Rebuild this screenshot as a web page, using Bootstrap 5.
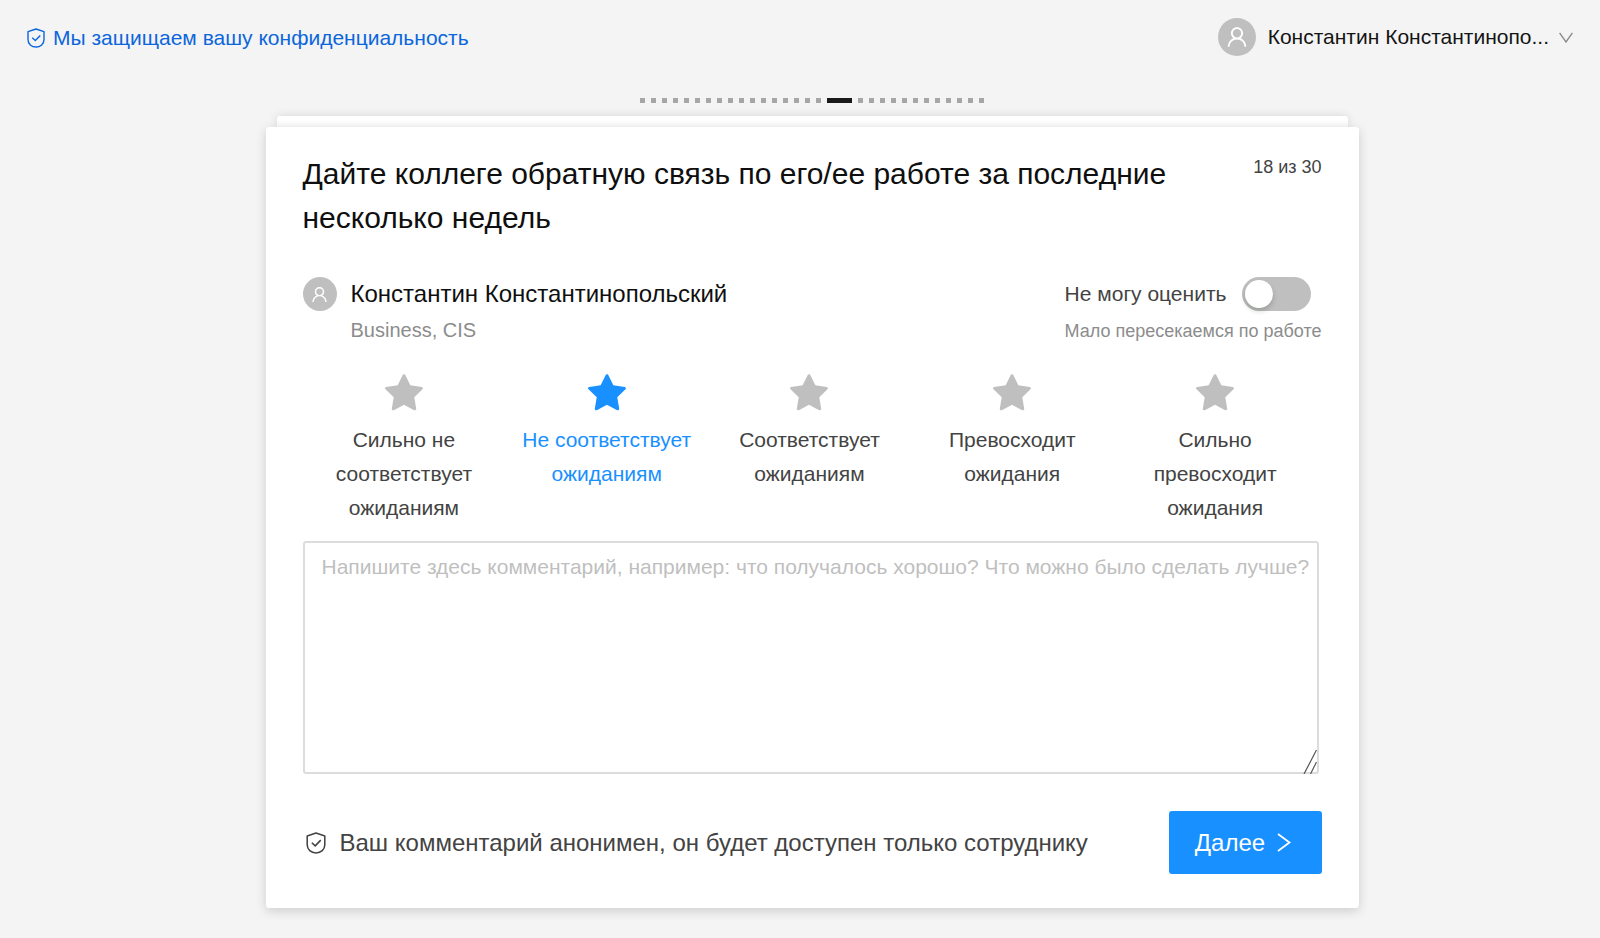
<!DOCTYPE html>
<html lang="ru">
<head>
<meta charset="utf-8">
<meta name="viewport" content="width=device-width, initial-scale=1">
<title>Обратная связь</title>
<link href="https://cdn.jsdelivr.net/npm/bootstrap@5.3.0/dist/css/bootstrap.min.css" rel="stylesheet">
<style>
  body { font-family: "Liberation Sans", Arial, sans-serif; font-size: 21px; line-height: 34px; color: #434343; background: #f4f4f4; }
  .topbar { padding: 18px 27px 0; line-height: 38px; }
  .privacy { color: #0b66dc; gap: 8px; padding-top: 1px; }
  .user-menu { font-size: 21px; line-height: 38px; color: #141414; gap: 12px; border: 0; }
  .user-menu svg:last-child { margin-left: -2px; }
  .avatar { width: 34px; height: 34px; border-radius: 50%; background: #bfbfbf; color: #fff; flex: none; }
  .avatar-lg { width: 38px; height: 38px; }
  .survey { max-width: 1117px; padding: 41px 12px 29px; left: 12px; }
  .steps { gap: 6px; height: 5px; margin-bottom: 13px; }
  .step { width: 5px; height: 5px; background: #a6a6a6; }
  .step.current { width: 25px; background: #1a1a1a; }
  .deck { height: 11px; margin: 0 11px; background: linear-gradient(#fff 40%, #f9f9f9); border-radius: 3px 3px 0 0; box-shadow: 0 0 10px rgba(0,0,0,.12); }
  .question { padding: 25px 37px 34px; background: #fff; border-radius: 3px; box-shadow: 0 3px 11px rgba(0,0,0,.16); }
  .question-title { font-size: 30px; line-height: 44px; font-weight: 400; color: #0f0f0f; max-width: 900px; margin: 0 0 37px; }
  .counter { font-size: 18px; line-height: 30px; }
  .person { font-size: 24px; line-height: 34px; color: #0f0f0f; }
  .identity { gap: 14px; }
  .muted { color: #8c8c8c; }
  .unit { font-size: 20px; line-height: 38px; }
  .hint { font-size: 18px; line-height: 40px; color: #8c8c8c; }
  .opt-out { gap: 16px; }
  .form-check-input.toggle { width: 69px; height: 34px; margin: 0; border: 0; background-color: #bfbfbf; background-image: none; box-shadow: none; }
  .toggle::before { content: ""; display: block; width: 28px; height: 28px; margin: 3px; border-radius: 50%; background: #fff; box-shadow: 0 3px 5px rgba(0,35,11,.2); }
  .toggle:checked::before { margin-left: 38px; }
  .form-check-input.toggle:checked { background-color: #1890ff; background-image: none; }
  .ratings { margin: 23px 5px 0 0; }
  .rating { flex: 1 1 0; padding: 0 12px; }
  .rating-star { display: block; margin: 0 auto 9px; color: #bfbfbf; }
  .btn-check:checked + .rating, .btn-check:checked + .rating .rating-star { color: #1890ff; }
  .comment { margin: 16px 3px 37px 0; }
  .comment textarea { height: 233px; padding: 7px 4px 7px 17px; font-size: 21px; line-height: 34px; border: 2px solid #dcdcdc; border-radius: 3px; resize: none; display: block; color: #434343; }
  .comment textarea::placeholder { color: #bfbfbf; }
  .grip { position: absolute; right: 2px; bottom: 0; color: #555; pointer-events: none; }
  .note { font-size: 24px; line-height: 36px; gap: 14px; padding-left: 3px; }
  .next { width: 153px; height: 63px; padding: 0 4px 0 0; font-size: 24px; background: #1890ff; color: #fff; border: 0; border-radius: 3px; gap: 12px; }
  .next:hover { background: #40a9ff; color: #fff; }
</style>
</head>
<body>
<svg width="0" height="0" class="d-none" aria-hidden="true">
  <symbol id="i-user" viewBox="64 64 896 896"><path fill="currentColor" d="M858.5 763.6a374 374 0 00-80.6-119.5 375.63 375.63 0 00-119.5-80.6c-.4-.2-.8-.3-1.2-.5C719.5 518 760 444.7 760 362c0-137-111-248-248-248S264 225 264 362c0 82.7 40.5 156 102.8 201.1-.4.2-.8.3-1.2.5-44.8 18.9-85 46-119.5 80.6a375.63 375.63 0 00-80.6 119.5A371.7 371.7 0 00136 901.8a8 8 0 008 8.2h60c4.4 0 7.9-3.5 8-7.8 2-77.2 33-149.5 87.8-204.3 56.7-56.7 132-87.9 212.2-87.9s155.5 31.2 212.2 87.9C779 752.7 810 825 812 902.2c.1 4.4 3.6 7.8 8 7.8h60a8 8 0 008-8.2c-1-47.8-10.9-94.3-29.5-138.2zM512 534c-45.9 0-89.1-17.9-121.6-50.4S340 407.9 340 362c0-45.9 17.9-89.1 50.4-121.6S466.1 190 512 190s89.1 17.9 121.6 50.4S684 316.1 684 362c0 45.9-17.9 89.1-50.4 121.6S557.9 534 512 534z"/></symbol>
  <symbol id="i-star" viewBox="64 64 896 896"><path fill="currentColor" d="M908.1 353.1l-253.9-36.9L540.7 86.1c-3.1-6.3-8.2-11.4-14.5-14.5-15.8-7.8-35-1.3-42.9 14.5L369.8 316.2l-253.9 36.9c-7 1-13.4 4.3-18.3 9.3a32.05 32.05 0 00.6 45.3l183.7 179.1-43.4 252.9a31.95 31.95 0 0046.4 33.7L512 754l227.1 119.4c6.2 3.3 13.4 4.4 20.3 3.2 17.4-3 29.1-19.5 26.1-36.9l-43.4-252.9 183.7-179.1c5-4.9 8.3-11.3 9.3-18.3 2.7-17.5-9.5-33.7-27-36.3z"/></symbol>
  <symbol id="i-shield" viewBox="0 0 18 20"><path fill="none" stroke="currentColor" stroke-width="1.4" stroke-linejoin="round" d="M9 1 L17 3.6 V11.5 C17 16 13.5 19 9 19 C4.5 19 1 16 1 11.5 V3.6 Z M5.2 9.8 L8.3 12.6 L13.3 7.4"/></symbol>
</svg>

<header class="topbar d-flex justify-content-between align-items-start">
  <a href="#" class="privacy d-flex align-items-center text-decoration-none"><svg width="18" height="20" aria-hidden="true"><use href="#i-shield"/></svg>Мы защищаем вашу конфиденциальность</a>
  <button type="button" class="user-menu btn p-0 d-flex align-items-center">
    <span class="avatar avatar-lg d-flex align-items-center justify-content-center"><svg width="22" height="22" class="m-0" aria-hidden="true"><use href="#i-user"/></svg></span>
    <span>Константин Константинопо...</span>
    <svg width="14" height="11" viewBox="0 0 14 11" fill="none" stroke="#8c8c8c" stroke-width="1.4" aria-hidden="true"><path d="M.6.8 7 10 13.4.8"/></svg>
  </button>
</header>

<main class="survey position-relative mx-auto">
  <div class="steps d-flex justify-content-center" id="steps"></div>
  <div class="deck"></div>
  <form class="question position-relative">
    <div class="d-flex justify-content-between align-items-start">
      <h1 class="question-title">Дайте коллеге обратную связь по его/ее работе за последние несколько недель</h1>
      <span class="counter text-nowrap">18 из 30</span>
    </div>
    <div class="d-flex justify-content-between">
      <div class="identity d-flex">
        <span class="avatar d-flex align-items-center justify-content-center"><svg width="17" height="17" aria-hidden="true"><use href="#i-user"/></svg></span>
        <div>
          <div class="person">Константин Константинопольский</div>
          <div class="unit muted">Business, CIS</div>
        </div>
      </div>
      <div>
        <div class="opt-out d-flex align-items-center">
          <label for="cannot">Не могу оценить</label>
          <input class="form-check-input toggle rounded-pill" type="checkbox" role="switch" id="cannot">
        </div>
        <div class="hint">Мало пересекаемся по работе</div>
      </div>
    </div>
    <div class="ratings d-flex text-center" role="radiogroup" aria-label="Оценка">
      <input type="radio" class="btn-check" name="rate" id="r1">
      <label class="rating" for="r1"><svg class="rating-star" width="40" height="40" aria-hidden="true"><use href="#i-star"/></svg>Сильно не соответствует ожиданиям</label>
      <input type="radio" class="btn-check" name="rate" id="r2" checked>
      <label class="rating" for="r2"><svg class="rating-star" width="40" height="40" aria-hidden="true"><use href="#i-star"/></svg>Не соответствует ожиданиям</label>
      <input type="radio" class="btn-check" name="rate" id="r3">
      <label class="rating" for="r3"><svg class="rating-star" width="40" height="40" aria-hidden="true"><use href="#i-star"/></svg>Соответствует ожиданиям</label>
      <input type="radio" class="btn-check" name="rate" id="r4">
      <label class="rating" for="r4"><svg class="rating-star" width="40" height="40" aria-hidden="true"><use href="#i-star"/></svg>Превосходит ожидания</label>
      <input type="radio" class="btn-check" name="rate" id="r5">
      <label class="rating" for="r5"><svg class="rating-star" width="40" height="40" aria-hidden="true"><use href="#i-star"/></svg>Сильно превосходит ожидания</label>
    </div>
    <div class="comment position-relative">
      <textarea class="form-control" aria-label="Комментарий" placeholder="Напишите здесь комментарий, например: что получалось хорошо? Что можно было сделать лучше?"></textarea>
      <svg class="grip" width="14" height="24" viewBox="0 0 14 24" fill="none" stroke="currentColor" stroke-width="1.2" aria-hidden="true"><path d="M1 24 13.5 0M7.5 24 13.5 12"/></svg>
    </div>
    <div class="d-flex justify-content-between align-items-center">
      <div class="note d-flex align-items-center"><svg width="20" height="22" aria-hidden="true"><use href="#i-shield"/></svg><span>Ваш комментарий анонимен, он будет доступен только сотруднику</span></div>
      <button type="button" class="next btn d-flex align-items-center justify-content-center">Далее
        <svg width="14" height="19" viewBox="0 0 14 19" fill="none" stroke="currentColor" stroke-width="1.8" aria-hidden="true"><path d="M1 1 12.5 9.5 1 18"/></svg>
      </button>
    </div>
  </form>
</main>
<script src="https://cdn.jsdelivr.net/npm/bootstrap@5.3.0/dist/js/bootstrap.bundle.min.js"></script>
<script>
  const steps = document.getElementById('steps');
  for (let i = 1; i <= 30; i++) {
    const dot = document.createElement('span');
    dot.className = i === 18 ? 'step current' : 'step';
    steps.append(dot);
  }
</script>
</body>
</html>
